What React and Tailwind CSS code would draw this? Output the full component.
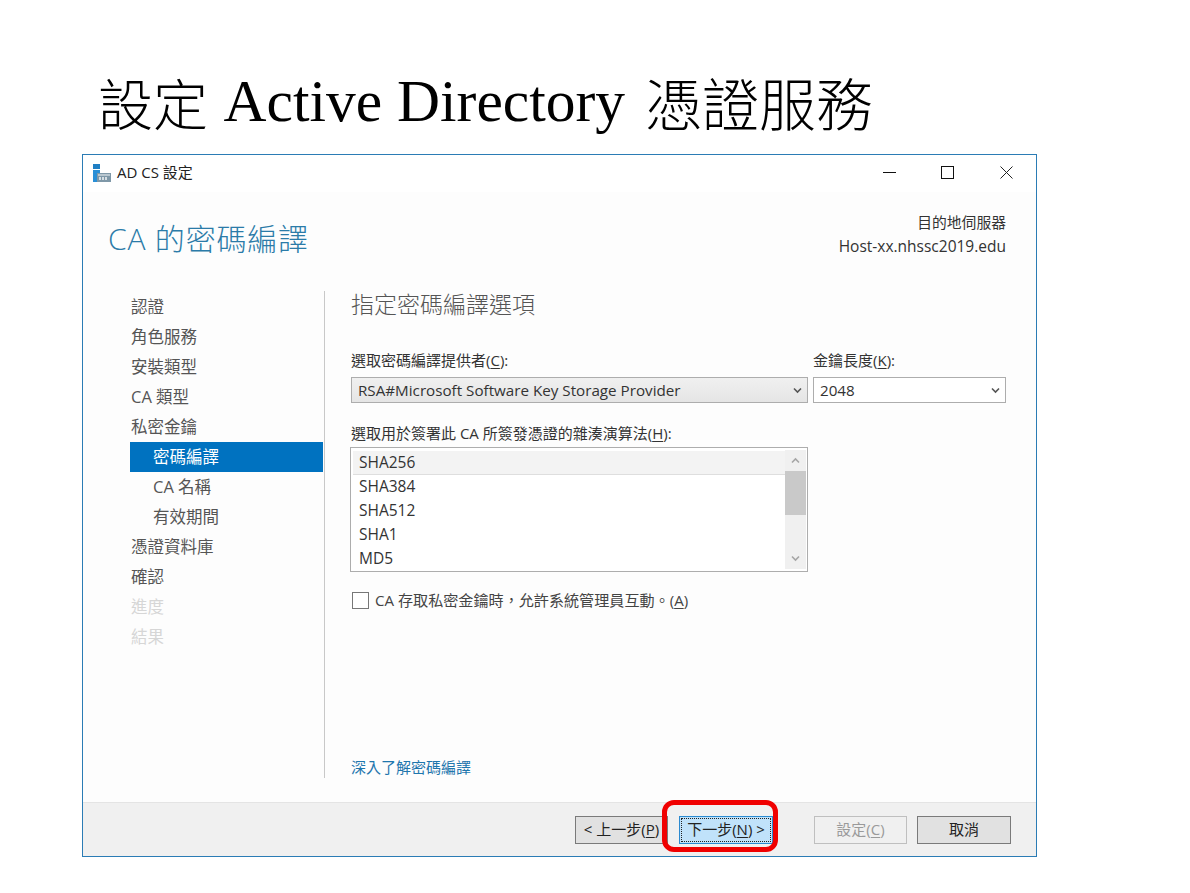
const cjk = "font-['Segoe_UI','Open_Sans','Noto_Sans_CJK_TC',sans-serif]";

function U({ children }) {
  return <span className="underline underline-offset-2">{children}</span>;
}

function Chevron({ up = false, className = "" }) {
  return (
    <svg width="9" height="7" viewBox="0 0 9 7" className={className}>
      <path d={up ? "M1 5.5 L4.5 2 L8 5.5" : "M1 1.5 L4.5 5 L8 1.5"} fill="none" stroke="currentColor" strokeWidth="1.6" />
    </svg>
  );
}

function AppIcon() {
  return (
    <svg width="20" height="20" viewBox="0 0 20 20">
      <rect x="1" y="1" width="7" height="5" fill="#1f7fc4" />
      <rect x="1" y="7" width="7" height="12" fill="#2a8fd6" />
      <rect x="5" y="10" width="14" height="9" fill="#7f98a8" />
      <rect x="6" y="11" width="12" height="2" fill="#b9c7d0" />
      <rect x="7" y="14" width="2" height="3" fill="#d5dde2" />
      <rect x="10" y="14" width="2" height="3" fill="#d5dde2" />
      <rect x="13" y="14" width="2" height="3" fill="#d5dde2" />
    </svg>
  );
}

function NavItem({ children, sub = false, active = false, disabled = false }) {
  return (
    <div
      className={
        "h-[30px] flex items-center text-[16.5px] " +
        (sub ? "pl-[23px] " : "pl-px ") +
        (active ? "bg-[#0072c0] text-white " : disabled ? "text-[#d6d6d6] " : "text-[#555555] ")
      }
    >
      {children}
    </div>
  );
}

function Btn({ children, className = "" }) {
  return (
    <div className={"h-[28px] flex items-center justify-center text-[15px] border " + className}>{children}</div>
  );
}

export default function App() {
  return (
    <div className={"w-[1190px] h-[893px] bg-white overflow-hidden pt-[68px] pl-[82px] " + cjk}>
      <div className="h-[86px] pl-[16px] flex items-start text-[59.5px] leading-[66px] text-black font-['Liberation_Serif','Noto_Sans_CJK_TC',serif] whitespace-pre">
        <span className="mr-[4px] font-['Noto_Sans_CJK_TC',serif] font-light text-[55px]">設定</span>
        <span> Active Directory </span>
        <span className="ml-[5px] font-['Noto_Sans_CJK_TC',serif] font-light text-[57px]">憑證服務</span>
      </div>

      <div className="w-[955px] h-[703px] border border-[#2b7cb5] flex flex-col bg-[#fdfdfd]">
        {/* Title bar */}
        <div className="h-[37px] shrink-0 bg-white flex items-center pl-[9px] pr-[23px] pb-[2px]">
          <AppIcon />
          <span className="ml-[5px] text-[15px] text-[#222222]">AD CS 設定</span>
          <div className="ml-auto flex items-center">
            <svg width="13" height="13" viewBox="0 0 13 13"><path d="M0 6.5 H13" stroke="#111" strokeWidth="1" /></svg>
            <svg className="ml-[45px]" width="13" height="13" viewBox="0 0 13 13"><rect x="0.5" y="0.5" width="12" height="12" fill="none" stroke="#111" strokeWidth="1" /></svg>
            <svg className="ml-[46px]" width="13" height="13" viewBox="0 0 13 13"><path d="M0.5 0.5 L12.5 12.5 M12.5 0.5 L0.5 12.5" stroke="#222" strokeWidth="1" /></svg>
          </div>
        </div>

        {/* Header */}
        <div className="h-[99px] shrink-0 flex justify-between pl-[25px] pr-[30px]">
          <div className="mt-[27px] text-[30px] leading-[40px] font-light text-[#2b7ba8] tracking-[0.8px]">CA 的密碼編譯</div>
          <div className="mt-[18px] text-right text-[14.8px] leading-[24px] text-[#333333]">
            <div>目的地伺服器</div>
            <div className="text-[15.5px]">Host-xx.nhssc2019.edu</div>
          </div>
        </div>

        {/* Body */}
        <div className="flex h-[487px] shrink-0 pl-[47px]">
          <div className="w-[193px] pt-px shrink-0 flex flex-col">
            <NavItem>認證</NavItem>
            <NavItem>角色服務</NavItem>
            <NavItem>安裝類型</NavItem>
            <NavItem>CA 類型</NavItem>
            <NavItem>私密金鑰</NavItem>
            <NavItem sub active>密碼編譯</NavItem>
            <NavItem sub>CA 名稱</NavItem>
            <NavItem sub>有效期間</NavItem>
            <NavItem>憑證資料庫</NavItem>
            <NavItem>確認</NavItem>
            <NavItem disabled>進度</NavItem>
            <NavItem disabled>結果</NavItem>
          </div>
          <div className="ml-[1px] w-[1px] bg-[#c8c8c8]" />
          <div className="ml-[26px] w-[656px] flex flex-col">
            <div className="h-[30px] flex items-center text-[23px] font-light text-[#555555] pb-[4px]">指定密碼編譯選項</div>
            <div className="mt-[27px] flex gap-[5px]">
              <div className="w-[457px]">
                <div className="h-[24px] flex items-center text-[15px] text-[#333333]">選取密碼編譯提供者(<U>C</U>):</div>
                <div className="mt-[5px] h-[26px] border border-[#adadad] bg-gradient-to-b from-[#f0f0f0] to-[#e5e5e5] flex items-center pl-[6px] pr-[5px] text-[15.2px] text-[#333333] justify-between">
                  <span>RSA#Microsoft Software Key Storage Provider</span>
                  <Chevron className="text-[#555555]" />
                </div>
              </div>
              <div className="w-[193px]">
                <div className="h-[24px] flex items-center text-[15px] text-[#333333]">金鑰長度(<U>K</U>):</div>
                <div className="mt-[5px] h-[26px] border border-[#adadad] bg-white flex items-center pl-[6px] pr-[5px] text-[15.2px] text-[#333333] justify-between">
                  <span>2048</span>
                  <Chevron className="text-[#555555]" />
                </div>
              </div>
            </div>
            <div className="mt-[18px] h-[24px] flex items-center text-[15px] text-[#333333]">選取用於簽署此 CA 所簽發憑證的雜湊演算法(<U>H</U>):</div>
            <div className="mt-[2px] -ml-px w-[458px] h-[125px] border border-[#adadad] bg-white flex p-[2px] pr-[1px]">
              <div className="flex-1 flex flex-col pt-px text-[15.5px] text-[#333333]">
                <div className="h-[24px] shrink-0 bg-[#f3f3f3] border-b border-[#dedede] flex items-center pl-[6px]">SHA256</div>
                <div className="h-[24px] shrink-0 flex items-center pl-[6px]">SHA384</div>
                <div className="h-[24px] shrink-0 flex items-center pl-[6px]">SHA512</div>
                <div className="h-[24px] shrink-0 flex items-center pl-[6px]">SHA1</div>
                <div className="h-[24px] shrink-0 flex items-center pl-[6px]">MD5</div>
              </div>
              <div className="w-[21px] bg-[#f0f0f0] flex flex-col items-center text-[#a6a6a6]">
                <div className="h-[21px] flex items-center justify-center"><Chevron up /></div>
                <div className="w-full h-[44px] bg-[#c9c9c9]" />
                <div className="mt-auto h-[21px] flex items-center justify-center"><Chevron /></div>
              </div>
            </div>
            <div className="mt-[20px] flex items-center h-[17px] text-[15.1px] text-[#444444]">
              <div className="ml-px w-[17px] h-[17px] border border-[#777777] bg-white" />
              <span className="ml-[6px]">CA 存取私密金鑰時，允許系統管理員互動。(<U>A</U>)</span>
            </div>
            <div className="mt-auto mb-[1px] h-[20px] flex items-center text-[15px] text-[#1f76ad]">深入了解密碼編譯</div>
          </div>
        </div>

        {/* Footer */}
        <div className="mt-auto h-[54px] shrink-0 bg-[#f0f0f0] border-t border-[#e4e4e4] flex items-center pl-[492px]">
          <Btn className="w-[93px] bg-[#e1e1e1] border-[#7a7a7a] text-[#222222]">&lt; 上一步(<U>P</U>)</Btn>
          <div className="relative ml-[11px]">
            <Btn className="w-[94px] bg-[#c0e2fa] border-[#2b8ad0] text-[#222222]">
              <span className="border border-dotted border-[#222222] w-[90px] h-[24px] flex items-center justify-center">下一步(<U>N</U>) &gt;</span>
            </Btn>
            <div className="absolute -left-[17px] -top-[16px] w-[116px] h-[52px] rounded-[12px] border-[5px] border-[#f00000]" />
          </div>
          <Btn className="ml-[41px] w-[93px] bg-[#f0f0f0] border-[#bfbfbf] text-[#9a9a9a]">設定(<U>C</U>)</Btn>
          <Btn className="ml-[10px] w-[94px] bg-[#e1e1e1] border-[#7a7a7a] text-[#222222]">取消</Btn>
        </div>
      </div>
    </div>
  );
}
